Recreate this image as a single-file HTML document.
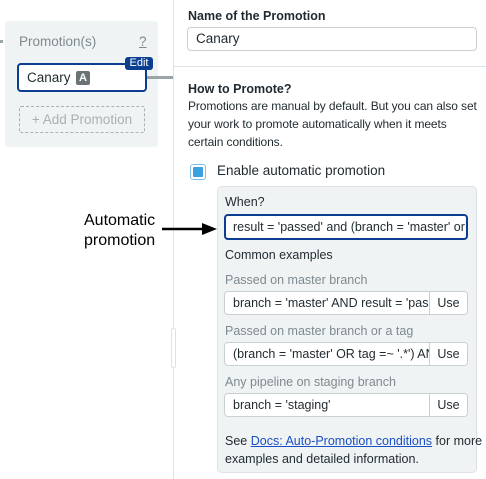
<!DOCTYPE html>
<html><head><meta charset="utf-8"><style>
*{box-sizing:border-box;margin:0;padding:0}
body{width:486px;height:479px;overflow:hidden;background:#fff;font-family:"Liberation Sans",sans-serif;font-size:12.5px;color:#1f2a30;position:relative}
.a{position:absolute;white-space:nowrap}
.inp{position:absolute;background:#fff;border:1px solid #c9d0d3;border-radius:4px;font-size:12.5px;padding-left:8px;overflow:hidden;white-space:nowrap}
.use{position:absolute;right:0;top:0;bottom:0;width:38px;border-left:1px solid #c9d0d3;text-align:center;background:#fff}
.lbl{color:#7e8a90}
</style></head><body>
<div class="a" style="left:173px;top:0;width:1px;height:479px;background:#dde2e4"></div>
<div class="a" style="left:174px;top:66px;width:312px;height:1px;background:#dde2e4"></div>
<div class="a" style="left:0;top:40px;width:3px;height:3px;background:#9aa5aa"></div>
<div class="a" style="left:171px;top:328px;width:5px;height:40px;border:1px solid #dde2e4;background:#fff;border-radius:2px"></div>

<div class="a" style="left:5px;top:21px;width:153px;height:126px;background:#f0f3f4;border-radius:4px"></div>
<div class="a" style="left:19px;top:34px;font-size:13.5px;color:#7e8a90">Promotion(s)</div>
<div class="a" style="left:139px;top:34px;font-size:13.5px;color:#7e8a90;text-decoration:underline">?</div>
<div class="a" style="left:146px;top:76px;width:27px;height:3px;background:#9aa5aa"></div>
<div class="a" style="left:17px;top:63px;width:130px;height:29px;border:2px solid #0b3d91;border-radius:4px;background:#fff"></div>
<div class="a" style="left:27px;top:70px;font-size:13.5px">Canary</div>
<div class="a" style="left:76px;top:71px;width:14px;height:14px;background:#6b7376;border-radius:2px;color:#fff;font-size:11px;text-align:center;line-height:14px;font-weight:bold">A</div>
<div class="a" style="left:125px;top:57px;width:28px;height:13px;background:#0b3d91;border-radius:3px;color:#fff;font-size:11px;text-align:center;line-height:13px">Edit</div>
<div class="a" style="left:19px;top:106px;width:126px;height:27px;border:1px dashed #a8b1b5;border-radius:2px;color:#a8b1b5;font-size:13.5px;text-align:center;line-height:25px">+ Add Promotion</div>

<div class="a" style="left:188px;top:9px;font-weight:bold;font-size:12.5px">Name of the Promotion</div>
<div class="inp" style="left:187px;top:27px;width:290px;height:24px;line-height:22px;font-size:13.5px">Canary</div>
<div class="a" style="left:188px;top:82px;font-weight:bold;font-size:12.5px">How to Promote?</div>
<div class="a" style="left:188px;top:97px;font-size:12px;letter-spacing:-0.1px;line-height:18px">Promotions are manual by default. But you can also set<br>your work to promote automatically when it meets<br>certain conditions.</div>

<div class="a" style="left:190px;top:164px;width:16px;height:16px;border:1px solid #7ec2ea;border-radius:3px;background:#fff"></div>
<div class="a" style="left:193px;top:167px;width:10px;height:10px;background:#3aa0e0;border-radius:1px"></div>
<div class="a" style="left:217px;top:163px;font-size:13.5px">Enable automatic promotion</div>

<div class="a" style="left:217px;top:186px;width:260px;height:287px;background:#f0f3f4;border:1px solid #dde2e4;border-radius:5px"></div>
<div class="a" style="left:225px;top:195px;font-size:12.5px">When?</div>
<div class="inp" style="left:224px;top:214px;width:244px;height:26px;line-height:22px;border:2px solid #0b3d91;border-radius:4px;padding-left:7px">result = 'passed' and (branch = 'master' or tag</div>
<div class="a" style="left:225px;top:248px;font-size:12.5px">Common examples</div>
<div class="a lbl" style="left:225px;top:273px">Passed on master branch</div>
<div class="inp" style="left:224px;top:291px;width:244px;height:24px;line-height:22px">branch = 'master' AND result = 'passed'<div class="use">Use</div></div>
<div class="a lbl" style="left:225px;top:324px">Passed on master branch or a tag</div>
<div class="inp" style="left:224px;top:342px;width:244px;height:24px;line-height:22px">(branch = 'master' OR tag =~ '.*') AND<div class="use">Use</div></div>
<div class="a lbl" style="left:225px;top:375px">Any pipeline on staging branch</div>
<div class="inp" style="left:224px;top:393px;width:244px;height:24px;line-height:22px">branch = 'staging'<div class="use">Use</div></div>
<div class="a" style="left:225px;top:432px;font-size:12.5px;line-height:18px">See <span style="color:#1a4fc4;text-decoration:underline">Docs: Auto-Promotion conditions</span> for more<br>examples and detailed information.</div>

<div class="a" style="left:84px;top:211px;font-size:16px;line-height:20px;text-align:center;color:#000">Automatic<br>promotion</div>
<svg class="a" style="left:160px;top:222px" width="58" height="14"><line x1="2" y1="7" x2="44" y2="7" stroke="#000" stroke-width="2.5"/><polygon points="42,1 57,7 42,13" fill="#000"/></svg>
</body></html>
